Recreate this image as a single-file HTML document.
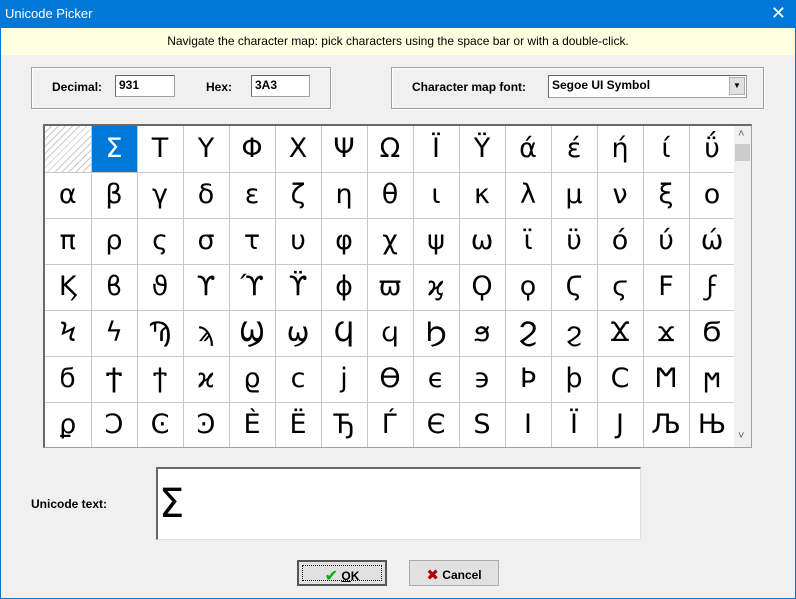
<!DOCTYPE html>
<html><head><meta charset="utf-8"><style>
*{box-sizing:border-box;margin:0;padding:0}
body{width:796px;height:599px;background:#f0f0f0;font-family:"Liberation Sans","DejaVu Sans",sans-serif;position:relative;overflow:hidden;font-size:12px}
.a{position:absolute}
#tb{left:0;top:0;width:796px;height:28px;background:#0078d7;color:#fff;font-size:13px;padding:6px 0 0 5px}
#bl{left:0;top:28px;width:1px;height:571px;background:#0078d7}
#br{right:0;top:28px;width:1px;height:571px;background:#0078d7}
#bb{left:0;bottom:0;width:796px;height:1px;background:#0078d7}
#info{left:1px;top:28px;width:794px;height:27px;background:#ffffe1;text-align:center;padding-top:6px;font-size:12px}
.grp{border:1px solid #a0a0a0;box-shadow:inset 1px 1px 0 #fff,1px 1px 0 #fff}
.lbl{font-weight:bold;font-size:12px}
.inp{background:#fff;border:1px solid #a0a0a0;border-top-color:#696969;border-left-color:#696969;font-weight:bold;padding:2px 0 0 3px;font-size:12px}
#grid{left:43px;top:124px;width:709px;height:324px;border:1px solid #a0a0a0;border-top:2px solid #696969;border-left:2px solid #696969;background:#fff;overflow:hidden}
table{border-collapse:collapse;position:absolute;left:0;top:0}
td{width:46px;height:46px;border-right:1px solid #c8c8c8;border-bottom:1px solid #c8c8c8;text-align:center;font-size:27px;font-family:"DejaVu Sans","Liberation Sans",sans-serif;line-height:44px;padding:0;overflow:hidden}
td.s{background:#0078d7;color:#fff}
td.h{background:repeating-linear-gradient(135deg,#fff 0 4px,#c8c8c8 4px 5px)}
#sb{left:689px;top:0;width:17px;height:322px;background:#f0f0f0}
.btn{background:#e1e1e1;border:1px solid #adadad;font-size:12px;font-weight:bold;text-align:center}
</style></head><body>
<div id="tb" class="a">Unicode Picker</div>
<div class="a" style="right:10px;top:3px;color:#fff;font-size:18px">✕</div>
<div id="bl" class="a"></div><div id="br" class="a"></div><div id="bb" class="a"></div>
<div id="info" class="a">Navigate the character map: pick characters using the space bar or with a double-click.</div>

<div class="a grp" style="left:31px;top:67px;width:300px;height:42px"></div>
<div class="a lbl" style="left:52px;top:80px">Decimal:</div>
<div class="a inp" style="left:115px;top:75px;width:60px;height:22px">931</div>
<div class="a lbl" style="left:206px;top:80px">Hex:</div>
<div class="a inp" style="left:251px;top:75px;width:59px;height:22px">3A3</div>

<div class="a grp" style="left:391px;top:67px;width:373px;height:42px"></div>
<div class="a lbl" style="left:412px;top:80px">Character map font:</div>
<div class="a inp" style="left:548px;top:75px;width:199px;height:23px;background:#fff">Segoe UI Symbol</div>
<div class="a" style="left:729px;top:77px;width:16px;height:18px;background:#e1e1e1;border:1px solid #adadad;font-size:8px;text-align:center;line-height:16px">▼</div>

<div id="grid" class="a">
<table>
<tr><td class="h"></td><td class="s">Σ</td><td>Τ</td><td>Υ</td><td>Φ</td><td>Χ</td><td>Ψ</td><td>Ω</td><td>Ϊ</td><td>Ϋ</td><td>ά</td><td>έ</td><td>ή</td><td>ί</td><td>ΰ</td></tr>
<tr><td>α</td><td>β</td><td>γ</td><td>δ</td><td>ε</td><td>ζ</td><td>η</td><td>θ</td><td>ι</td><td>κ</td><td>λ</td><td>μ</td><td>ν</td><td>ξ</td><td>ο</td></tr>
<tr><td>π</td><td>ρ</td><td>ς</td><td>σ</td><td>τ</td><td>υ</td><td>φ</td><td>χ</td><td>ψ</td><td>ω</td><td>ϊ</td><td>ϋ</td><td>ό</td><td>ύ</td><td>ώ</td></tr>
<tr><td>Ϗ</td><td>ϐ</td><td>ϑ</td><td>ϒ</td><td>ϓ</td><td>ϔ</td><td>ϕ</td><td>ϖ</td><td>ϗ</td><td>Ϙ</td><td>ϙ</td><td>Ϛ</td><td>ϛ</td><td>Ϝ</td><td>ϝ</td></tr>
<tr><td>Ϟ</td><td>ϟ</td><td>Ϡ</td><td>ϡ</td><td>Ϣ</td><td>ϣ</td><td>Ϥ</td><td>ϥ</td><td>Ϧ</td><td>ϧ</td><td>Ϩ</td><td>ϩ</td><td>Ϫ</td><td>ϫ</td><td>Ϭ</td></tr>
<tr><td>ϭ</td><td>Ϯ</td><td>ϯ</td><td>ϰ</td><td>ϱ</td><td>ϲ</td><td>ϳ</td><td>ϴ</td><td>ϵ</td><td>϶</td><td>Ϸ</td><td>ϸ</td><td>Ϲ</td><td>Ϻ</td><td>ϻ</td></tr>
<tr><td>ϼ</td><td>Ͻ</td><td>Ͼ</td><td>Ͽ</td><td>Ѐ</td><td>Ё</td><td>Ђ</td><td>Ѓ</td><td>Є</td><td>Ѕ</td><td>І</td><td>Ї</td><td>Ј</td><td>Љ</td><td>Њ</td></tr>
</table>
<div id="sb" class="a">
<div class="a" style="left:4px;top:2px;font-size:11px;color:#606060">˄</div>
<div class="a" style="left:1px;top:18px;width:15px;height:17px;background:#cdcdcd"></div>
<div class="a" style="left:4px;top:304px;font-size:11px;color:#606060">˅</div>
</div>
</div>

<div class="a lbl" style="left:31px;top:497px">Unicode text:</div>
<div class="a" style="left:156px;top:467px;width:485px;height:73px;background:#fff;border:1px solid #e0e0e0;border-top:2px solid #696969;border-left:2px solid #696969;font-size:40px;font-family:'DejaVu Sans',sans-serif;padding:10px 0 0 1px;line-height:50px">Σ</div>

<div class="a btn" style="left:297px;top:560px;width:90px;height:26px;border:2px solid #555;padding-top:4px">
<div style="position:absolute;left:3px;top:3px;right:3px;bottom:3px;border:1px dotted #000"></div>
<span style="color:#0a0;font-size:16px;vertical-align:-1px">✔</span> <u>O</u>K</div>
<div class="a btn" style="left:409px;top:560px;width:90px;height:26px;padding-top:5px">
<span style="color:#b00000;font-size:15px;vertical-align:-1px">✖</span> Cancel</div>
</body></html>
